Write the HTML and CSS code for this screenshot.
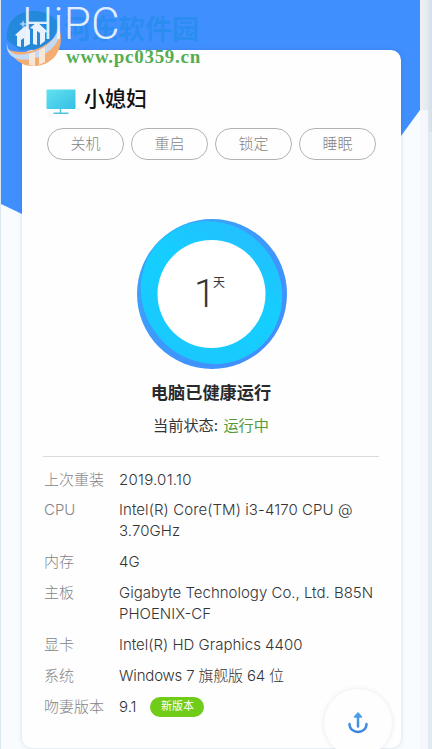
FILE: index.html
```html
<!DOCTYPE html>
<html lang="zh-CN">
<head>
<meta charset="utf-8">
<title>HiPC</title>
<link rel="stylesheet" href="styles.css">
</head>
<body>
<div class="app">
  <svg class="backdrop" width="432" height="749" viewBox="0 0 432 749" aria-hidden="true">
    <defs><linearGradient id="edge"><stop offset="0" stop-color="#eef1f3"/><stop offset=".55" stop-color="#e5ebf0"/><stop offset="1" stop-color="#d3dfe8"/></linearGradient></defs>
    <path fill="#408fff" d="M1 0H420V110L401 136L250 310L22 214L1 204Z"/>
    <path fill="url(#edge)" d="M420 0h12v749h-12z"/>
    <path fill="#f5f7fd" d="M420 110h8v639h-8z"/>
    <path fill="#e2e9f1" d="M428 132h4v617h-4z"/>
    <path fill="#dce8ef" d="M0 0h1v749H0z"/>
  </svg>
  <header class="brand"><span class="brand-name">HiPC</span></header>
  <main class="card">
    <div class="device">
      <svg width="30" height="26" viewBox="0 0 30 26" aria-hidden="true">
        <defs><linearGradient id="screen" x2="1" y2="1"><stop stop-color="#62e0ee"/><stop offset="1" stop-color="#35bfe6"/></linearGradient></defs>
        <rect x=".5" y=".5" width="29" height="19.5" rx="1" fill="url(#screen)"/>
        <path d="M14.5 20v4M7.5 24.2h15" stroke="#4fc4dc" stroke-width="1.4" fill="none"/>
      </svg>
      <h1>小媳妇</h1>
    </div>
    <div class="actions"><button>关机</button><button>重启</button><button>锁定</button><button>睡眠</button></div>
    <div class="ring">
      <svg class="ring-art" width="152" height="152" viewBox="0 0 152 152" aria-hidden="true">
        <defs><linearGradient id="outer" x1="0" y1="0" x2="1" y2="1"><stop stop-color="#38a6fc"/><stop offset="1" stop-color="#438bfc"/></linearGradient>
        <linearGradient id="inner" x1=".2" y1="0" x2=".6" y2="1"><stop stop-color="#25bdff"/><stop offset=".45" stop-color="#15ceff"/><stop offset="1" stop-color="#19c9fd"/></linearGradient></defs>
        <circle cx="76" cy="76" r="75" fill="url(#outer)"/>
        <ellipse cx="75.5" cy="74.5" rx="73" ry="69" transform="rotate(50 75.5 74.5)" fill="url(#inner)"/>
        <circle cx="75.5" cy="76" r="54" fill="#fff"/>
      </svg>
      <div class="days"><span class="number">1</span><span class="unit">天</span></div>
    </div>
    <h2>电脑已健康运行</h2>
    <p class="status">当前状态: <span>运行中</span></p>
    <dl class="specs">
      <dt>上次重装</dt><dd class="date">2019.01.10</dd>
      <dt>CPU</dt><dd class="cpu">Intel(R) Core(TM) i3-4170 CPU @<br>3.70GHz</dd>
      <dt>内存</dt><dd>4G</dd>
      <dt>主板</dt><dd>Gigabyte Technology Co., Ltd. B85N<br>PHOENIX-CF</dd>
      <dt>显卡</dt><dd>Intel(R) HD Graphics 4400</dd>
      <dt>系统</dt><dd class="system">Windows 7 旗舰版 64 位</dd>
      <dt>吻妻版本</dt><dd class="version">9.1 <span class="tag">新版本</span></dd>
    </dl>
  </main>
  <div class="watermark">
    <svg width="56" height="57" viewBox="0 0 56 57" aria-hidden="true">
      <path fill="#2489da" d="M1 30C-1 12 11 1 28 1c12 0 22 6 25 14L42 38 14 40Z"/>
      <path fill="#f3ad72" d="M3 40c15 5 36 1 51-19 4 18-6 34-25 35C17 57 8 50 3 40Z"/>
      <path fill="#c3d9f8" d="M1 33c0 10 9 13 19 11 17-3 31-14 33-29 5 13-8 30-27 34C11 52-1 46 1 33Z"/>
      <path fill="#e9f1fc" d="M11 36V26l-2-1 10-9 5 4v14l-6 3v-9l-3 2v7ZM27 34V19l-3-1 7-6 10 9-2 2v8l-5 4V23l-3-2v14Z"/>
      <path fill="#f8e7d7" d="M23 55V44l6-2v14ZM33 55V40l6-3v15Z"/>
      <path fill="#a9d2ff" d="m17 10 1 3 3 1-3 1-1 3-1-3-3-1 3-1Z"/>
    </svg>
    <div class="watermark-copy"><strong>河东软件园</strong><span>www.pc0359.cn</span></div>
  </div>
  <button class="upload" aria-label="上传">
    <svg width="22" height="24" viewBox="0 0 22 24" aria-hidden="true">
      <defs><linearGradient id="arrow" x2="0" y2="1"><stop stop-color="#4b9ee8"/><stop offset="1" stop-color="#3b82e0"/></linearGradient></defs>
      <path d="M11 2 14.5 6H7.500Z" fill="#4b9ee8" stroke="#4b9ee8" stroke-width="1.5" stroke-linejoin="round"/>
      <path d="M11 5v10.500M2.500 13c0 10.500 17 10.500 17 0" fill="none" stroke="url(#arrow)" stroke-width="2.500" stroke-linecap="round"/>
    </svg>
  </button>
</div>
</body>
</html>
```
FILE: styles.css
```css
* { box-sizing: border-box; }
body { margin: 0; font-family: Inter, "Noto Sans CJK SC", sans-serif; color: #353537; }
h1, h2, p, dl, dd { margin: 0; }
button { font: inherit; padding: 0; }
.app { position: relative; width: 432px; height: 749px; overflow: hidden; background: #f8fcfe; }
.backdrop { position: absolute; inset: 0; }
.brand { position: relative; z-index: 2; height: 50px; padding-left: 22px; color: #f0f6ff; opacity: .92; }
.brand-name { display: block; font: 300 44px/49px Roboto, sans-serif; letter-spacing: .3px; }
.card { position: relative; width: 379px; height: 698px; margin-left: 22px; padding: 36px 22px 0 21px; border-radius: 10px; background: #fefefe; box-shadow: 0 0 5px #324f8030; }
.device { display: flex; align-items: center; gap: 8px; height: 28px; padding-left: 3px; }
.device svg { margin-top: 4px; }
h1 { margin-top: -3px; color: #111; font-size: 21px; font-weight: 500; line-height: 27px; }
.actions { display: flex; gap: 7px; margin: 14px 0 0 4px; }
.actions button { flex: 0 0 77px; height: 32px; border: 1px solid #b5b1b3; border-radius: 16px; background: transparent; color: #858385; font-size: 15px; font-weight: 300; line-height: 28px; }
.ring { position: relative; width: 152px; height: 152px; margin: 58px 0 0 93px; }
.ring-art { display: block; }
.days { position: absolute; inset: 52px 0 auto 58px; display: flex; line-height: 48px; }
.number { width: 19px; font: 300 39px/49px Roboto, sans-serif; }
.unit { font-size: 12px; line-height: 26px; }
h2 { margin-top: 10px; font-size: 17.200px; font-weight: 600; line-height: 25px; text-align: center; color: #29292b; }
.status { margin-top: 9px; line-height: 24px; font-size: 15.200px; text-align: center; white-space: pre; }
.status span { margin-left: 1px; color: #559b3a; }
.specs { display: grid; grid-template-columns: 75px 1fr; row-gap: 10.400px; margin-top: 18px; padding: 12.500px 0 0 1px; border-top: 1px solid #d9dadb; font-size: 15px; font-weight: 300; line-height: 20.600px; }
dt { color: #858487; white-space: nowrap; }
dd { white-space: nowrap; }
.date { letter-spacing: .25px; }
.cpu { letter-spacing: .08px; }
.system { letter-spacing: -.18px; }
.version { display: flex; align-items: center; gap: 14px; }
.tag { width: 54px; height: 20px; border-radius: 10px; background: #71cc19; color: #fff; font-size: 11px; font-weight: 400; line-height: 19px; text-align: center; }
.watermark { position: absolute; top: 10px; left: 6px; display: flex; gap: 2px; }
.watermark-copy { display: flex; flex-direction: column; padding-top: 4px; }
.watermark strong { color: #2b8df0; font-size: 27px; font-weight: 700; line-height: 32px; }
.watermark span { margin-left: 2px; color: #55ad51; font: 700 19px/22px "Liberation Serif", serif; letter-spacing: .72px; }
.upload { position: absolute; left: 324px; top: 689px; display: grid; place-items: center; width: 68px; height: 68px; border: 0; border-radius: 50%; background: #fefefe; box-shadow: 0 0 5px #705f7924; }
```
